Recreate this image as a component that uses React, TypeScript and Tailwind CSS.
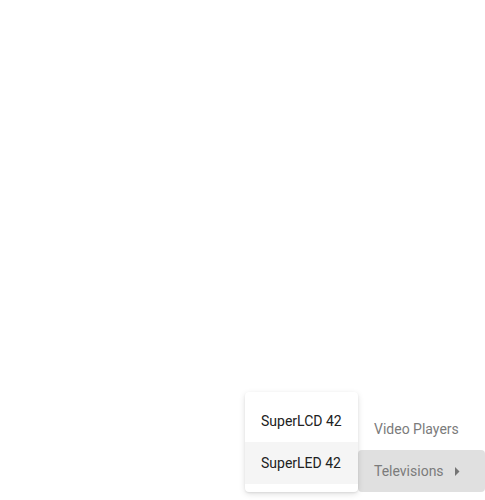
import { ReactNode } from 'react';

// 카테고리 메뉴 + 하위 메뉴 (MUI 스타일)

function SubItem({ children, active = false }: { children: ReactNode; active?: boolean }) {
  return (
    <div
      className={
        'flex h-[42px] items-center px-4 text-[14px] text-[#212121] ' +
        (active ? 'bg-[#f5f5f5]' : 'bg-white')
      }
    >
      {children}
    </div>
  );
}

function MenuItem({ children, active = false, arrow = false }: { children: ReactNode; active?: boolean; arrow?: boolean }) {
  return (
    <div
      className={
        'flex h-[42px] items-center gap-[11px] rounded pl-4 text-[14px] text-[#7b7b7b] ' +
        (active ? 'bg-[#e0e0e0]' : '')
      }
    >
      <span>{children}</span>
      {arrow && (
        <svg width="5" height="9" viewBox="0 0 5 9" className="mt-px">
          <path d="M0 0 L4.5 4.5 L0 9 Z" fill="#757575" />
        </svg>
      )}
    </div>
  );
}

export default function App() {
  return (
    <div
      className="flex h-[500px] w-[485px] items-end bg-white pb-2 pl-[245px]"
      style={{ fontFamily: 'Roboto, "Liberation Sans", sans-serif' }}
    >
      {/* 하위 메뉴 */}
      <div className="relative z-10 w-[113px] rounded bg-white py-2 shadow-[0_2px_6px_rgba(0,0,0,0.12),0_1px_2px_rgba(0,0,0,0.08)]">
        <SubItem>SuperLCD 42</SubItem>
        <SubItem active>SuperLED 42</SubItem>
      </div>

      {/* 메인 메뉴 */}
      <div className="flex w-[127px] flex-col">
        <MenuItem>Video Players</MenuItem>
        <MenuItem active arrow>
          Televisions
        </MenuItem>
      </div>
    </div>
  );
}
